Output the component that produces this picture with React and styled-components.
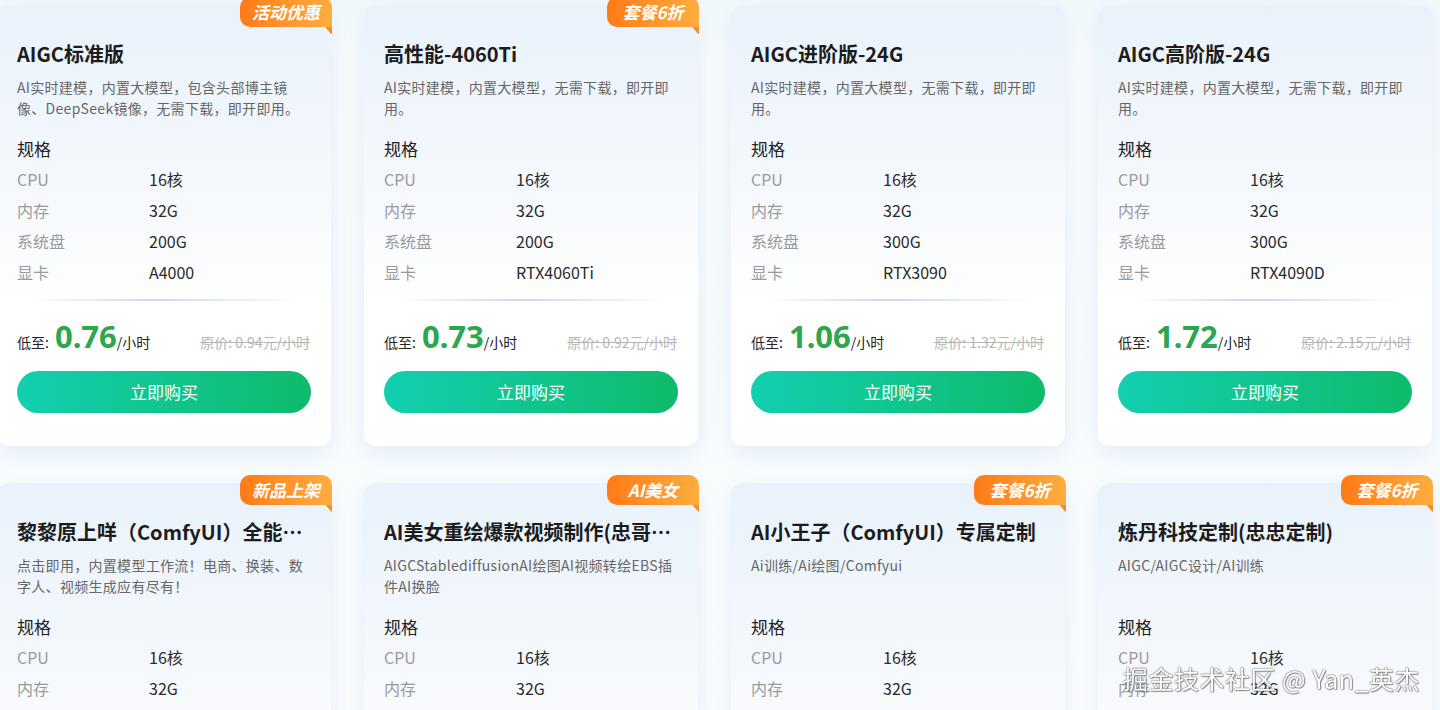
import React from 'react';
import styled, { createGlobalStyle } from 'styled-components';

const GlobalStyle = createGlobalStyle`
  html, body {
    margin: 0;
    padding: 0;
    overflow: hidden;
    background: #f6fafd;
    font-family: "Noto Sans CJK SC", "Noto Sans", sans-serif;
  }
`;

const plans = [
  {
    title: 'AIGC标准版',
    badge: '活动优惠',
    desc: 'AI实时建模，内置大模型，包含头部博主镜像、DeepSeek镜像，无需下载，即开即用。',
    specs: ['16核', '32G', '200G', 'A4000'],
    price: '0.76',
    origin: '0.94',
  },
  {
    title: '高性能-4060Ti',
    badge: '套餐6折',
    desc: 'AI实时建模，内置大模型，无需下载，即开即用。',
    specs: ['16核', '32G', '200G', 'RTX4060Ti'],
    price: '0.73',
    origin: '0.92',
  },
  {
    title: 'AIGC进阶版-24G',
    desc: 'AI实时建模，内置大模型，无需下载，即开即用。',
    specs: ['16核', '32G', '300G', 'RTX3090'],
    price: '1.06',
    origin: '1.32',
  },
  {
    title: 'AIGC高阶版-24G',
    desc: 'AI实时建模，内置大模型，无需下载，即开即用。',
    specs: ['16核', '32G', '300G', 'RTX4090D'],
    price: '1.72',
    origin: '2.15',
  },
  {
    title: '黎黎原上咩（ComfyUI）全能工作流套餐',
    badge: '新品上架',
    desc: '点击即用，内置模型工作流！电商、换装、数字人、视频生成应有尽有！',
    specs: ['16核', '32G', '200G', 'RTX4090D'],
    price: '1.72',
    origin: '2.15',
  },
  {
    title: 'AI美女重绘爆款视频制作(忠哥定制)',
    badge: 'AI美女',
    desc: 'AIGCStablediffusionAI绘图AI视频转绘EBS插件AI换脸',
    specs: ['16核', '32G', '200G', 'RTX4090D'],
    price: '1.72',
    origin: '2.15',
  },
  {
    title: 'AI小王子（ComfyUI）专属定制',
    badge: '套餐6折',
    desc: 'Ai训练/Ai绘图/Comfyui',
    specs: ['16核', '32G', '200G', 'RTX4090D'],
    price: '1.72',
    origin: '2.15',
  },
  {
    title: '炼丹科技定制(忠忠定制)',
    badge: '套餐6折',
    desc: 'AIGC/AIGC设计/AI训练',
    specs: ['16核', '32G', '200G', 'RTX4090D'],
    price: '1.72',
    origin: '2.15',
  },
];

const labels = ['CPU', '内存', '系统盘', '显卡'];

const Page = styled.div`
  padding-top: 5px;
  background: linear-gradient(180deg, #f0f9fa 0%, #f7fbfd 60px, #fbfdfe 100%);
  min-height: 710px;
`;

const Grid = styled.div`
  display: grid;
  grid-template-columns: repeat(4, 334px);
  column-gap: 33px;
  row-gap: 37px;
  margin-left: -3px;
`;

const Card = styled.div`
  position: relative;
  padding: 35px 20px 33px;
  border-radius: 12px;
  background: linear-gradient(180deg, #e9f2fb 0%, #f6f9fd 45%, #ffffff 68%);
  box-shadow: 0 8px 22px rgba(205, 220, 242, 0.45);
`;

const Badge = styled.div`
  position: absolute;
  top: -8px;
  right: -1px;
  width: 92px;
  height: 30px;
  border-radius: 10px 10px 0 10px;
  background: linear-gradient(90deg, #ff7b17 0%, #ffad3f 100%);
  color: #fff;
  font-size: 17px;
  font-weight: 700;
  font-style: italic;
  line-height: 30px;
  text-align: center;

  &::after {
    content: '';
    position: absolute;
    right: 0;
    top: 30px;
    width: 7px;
    height: 8px;
    background: #f0922c;
    clip-path: polygon(0 0, 100% 0, 100% 100%);
    border-radius: 0 0 2px 0;
  }
`;

const Title = styled.div`
  font-size: 20px;
  font-weight: 700;
  line-height: 28px;
  color: #1c1c1c;
  white-space: nowrap;
  overflow: hidden;
  text-overflow: ellipsis;
`;

const Desc = styled.div`
  margin-top: 9px;
  height: 42px;
  font-size: 14px;
  line-height: 21px;
  letter-spacing: 0.3px;
  color: #666;
  overflow: hidden;
  display: -webkit-box;
  -webkit-line-clamp: 2;
  -webkit-box-orient: vertical;
`;

const SectionLabel = styled.div`
  margin-top: 17px;
  font-size: 17px;
  line-height: 26px;
  color: #222;
`;

const SpecList = styled.div`
  margin-top: 2px;
`;

const SpecRow = styled.div`
  display: grid;
  grid-template-columns: 132px 1fr;
  font-size: 16px;
  line-height: 31px;
`;

const SpecKey = styled.span`
  color: #9a9a9a;
`;

const SpecValue = styled.span`
  color: #2a2a2a;
`;

const Divider = styled.div`
  margin: 11px 8px 0 14px;
  height: 2px;
  background: linear-gradient(90deg, rgba(205, 220, 245, 0) 0%, #c9d9f1 45%, rgba(205, 220, 245, 0) 100%);
`;

const PriceRow = styled.div`
  margin-top: 15px;
  height: 40px;
  display: flex;
  align-items: baseline;
  justify-content: space-between;
  line-height: 40px;
`;

const PriceMain = styled.div`
  display: flex;
  align-items: baseline;
  font-size: 14px;
  color: #222;
`;

const PriceNum = styled.span`
  margin-left: 6px;
  font-family: "Noto Sans", "Open Sans", sans-serif;
  font-size: 31px;
  font-weight: 700;
  color: #2ca64f;
`;

const Origin = styled.span`
  margin-right: 1px;
  font-size: 14px;
  color: #b5b5b5;
  text-decoration: line-through;
`;

const BuyButton = styled.button`
  display: block;
  width: 100%;
  margin-top: 14.5px;
  height: 42px;
  border: none;
  border-radius: 21px;
  background: linear-gradient(90deg, #12cfb0 0%, #0ebb6b 100%);
  color: #fff;
  font-family: inherit;
  font-size: 17px;
  cursor: pointer;
`;

const Watermark = styled.div`
  position: fixed;
  right: 20px;
  bottom: 17px;
  font-size: 25px;
  line-height: 30px;
  color: #fff;
  text-shadow: 0 0 1px #555, 0 0 2px #666, 1px 1px 1px rgba(0, 0, 0, 0.35);
  letter-spacing: 0.5px;
  pointer-events: none;
`;

const PlanCard = ({ plan }) => (
  <Card>
    {plan.badge && <Badge>{plan.badge}</Badge>}
    <Title>{plan.title}</Title>
    <Desc>{plan.desc}</Desc>
    <SectionLabel>规格</SectionLabel>
    <SpecList>
      {labels.map((l, i) => (
        <SpecRow key={l}>
          <SpecKey>{l}</SpecKey>
          <SpecValue>{plan.specs[i]}</SpecValue>
        </SpecRow>
      ))}
    </SpecList>
    <Divider />
    <PriceRow>
      <PriceMain>
        低至:<PriceNum>{plan.price}</PriceNum>/小时
      </PriceMain>
      <Origin>原价: {plan.origin}元/小时</Origin>
    </PriceRow>
    <BuyButton>立即购买</BuyButton>
  </Card>
);

const App = () => (
  <Page>
    <GlobalStyle />
    <Grid>
      {plans.map((p, i) => (
        <PlanCard key={i} plan={p} />
      ))}
    </Grid>
    <Watermark>掘金技术社区 @ Yan_英杰</Watermark>
  </Page>
);

export default App;
